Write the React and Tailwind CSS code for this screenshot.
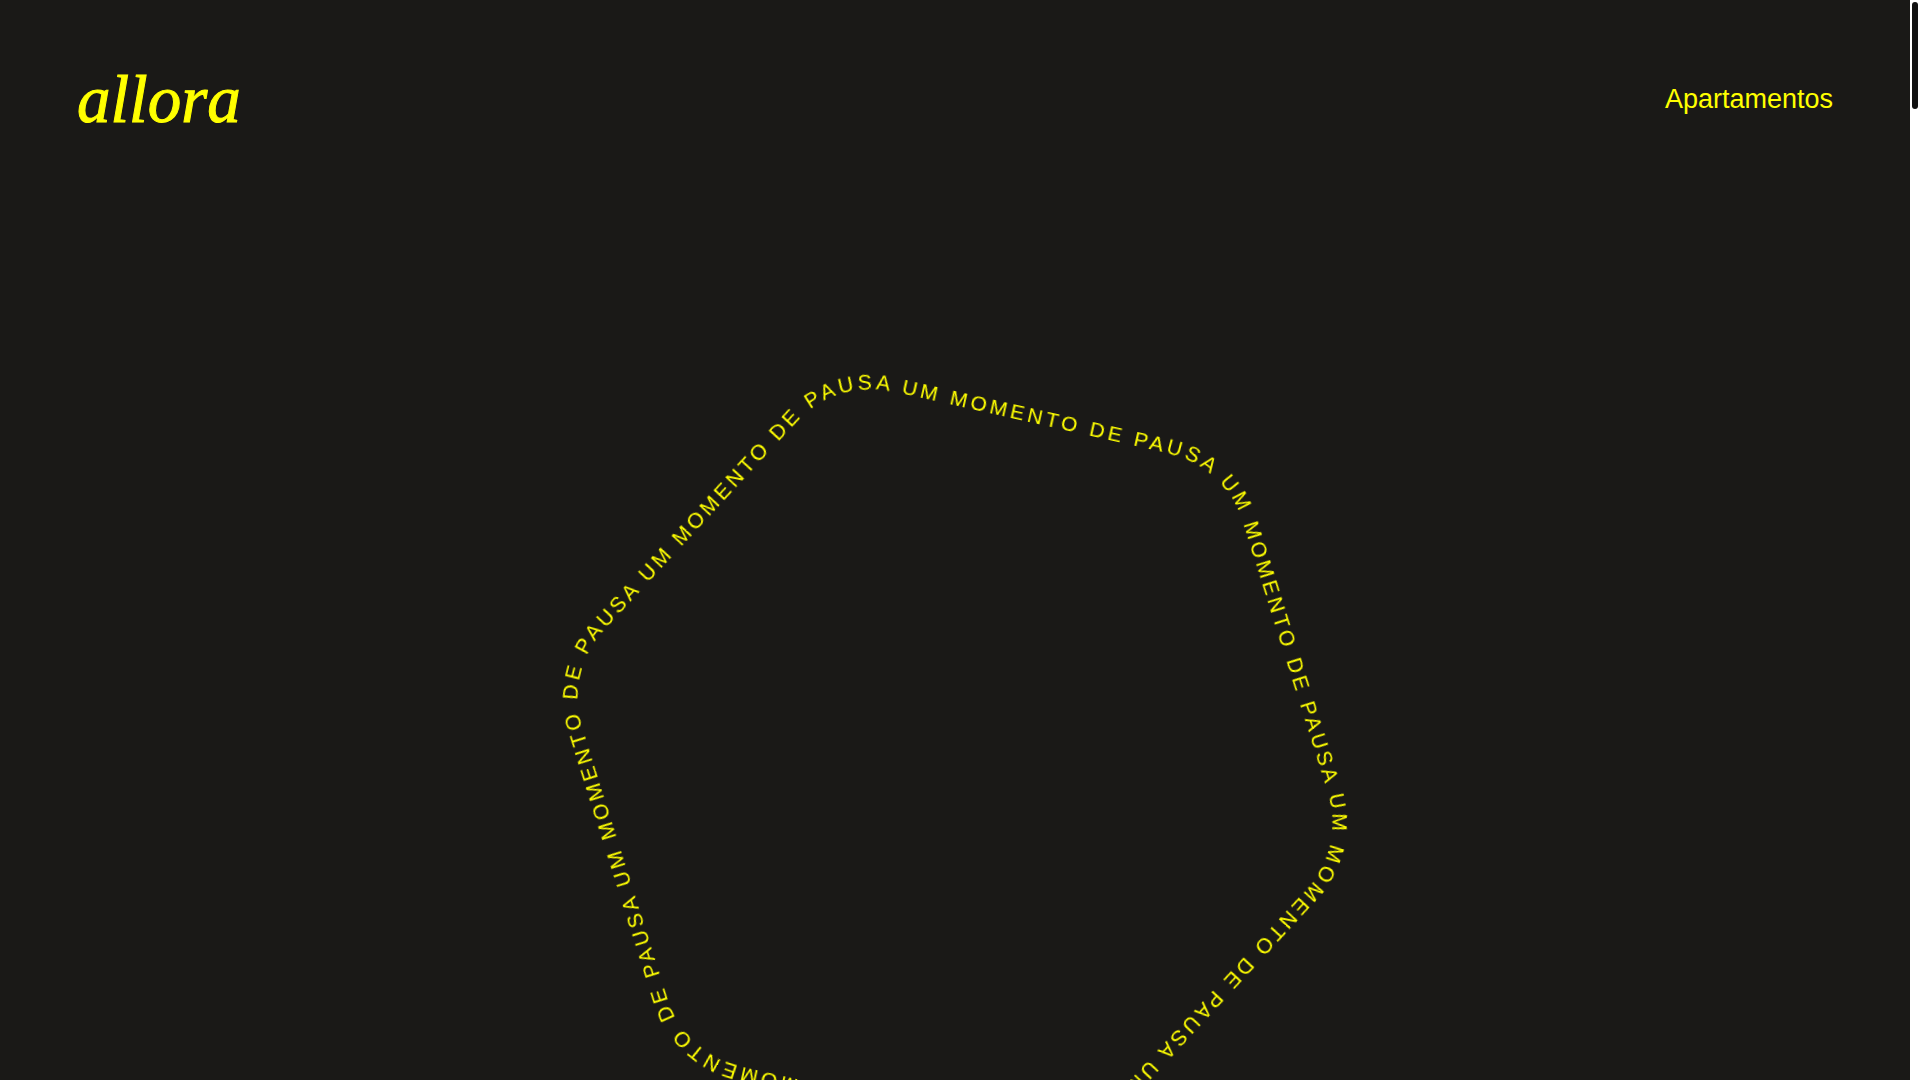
import React from 'react';

const PHRASE = 'UM MOMENTO DE PAUSA ';
const REPEAT = 7;

// Hexagon with rounded corners, drawn clockwise from the bottom side
const HEXAGON = [
    'M 162 395 L -162 395',
    'A 114 114 0 0 1 -261 338 L -424 57',
    'A 114 114 0 0 1 -424 -57 L -261 -338',
    'A 114 114 0 0 1 -162 -395 L 162 -395',
    'A 114 114 0 0 1 261 -338 L 424 -57',
    'A 114 114 0 0 1 424 57 L 261 338',
    'A 114 114 0 0 1 162 395',
].join(' ');

function Header() {
    return (
        <header className="flex items-center justify-between px-[77px] pt-[59px]">
            <a
                href="#inicio"
                className="font-['Liberation_Serif',serif] italic text-[67px] leading-[80px] [-webkit-text-stroke:1px_#ffff00]"
            >
                allora
            </a>
            <nav>
                <a href="#apartamentos" className="text-[27px] leading-8">Apartamentos</a>
            </nav>
        </header>
    );
}

function TextRing() {
    return (
        <svg
            viewBox="-480 -480 960 960"
            className="w-[840px] h-[840px] shrink-0 rotate-[12.65deg] will-change-transform"
            role="img"
            aria-label="Um momento de pausa"
        >
            <defs>
                <path id="hexagon" d={HEXAGON} />
            </defs>
            <text fill="#ffff00" xmlSpace="preserve" className="text-[24px] tracking-[4px]">
                <textPath href="#hexagon" startOffset="200">{PHRASE.repeat(REPEAT)}</textPath>
            </text>
        </svg>
    );
}

function ScrollBar() {
    return (
        <div className="w-[10px] shrink-0 bg-white px-[2px] py-[2px]" aria-hidden="true">
            <div className="h-[107px] rounded-full bg-[#111111]"></div>
        </div>
    );
}

export default function App() {
    return (
        <div className="flex h-screen overflow-hidden bg-[#1a1917] text-[#ffff00] font-['Liberation_Sans',Arial,sans-serif]">
            <div className="flex-1 min-w-0 flex flex-col">
                <Header />
                <main className="flex justify-center pt-[201px]">
                    <TextRing />
                </main>
            </div>
            <ScrollBar />
        </div>
    );
}
